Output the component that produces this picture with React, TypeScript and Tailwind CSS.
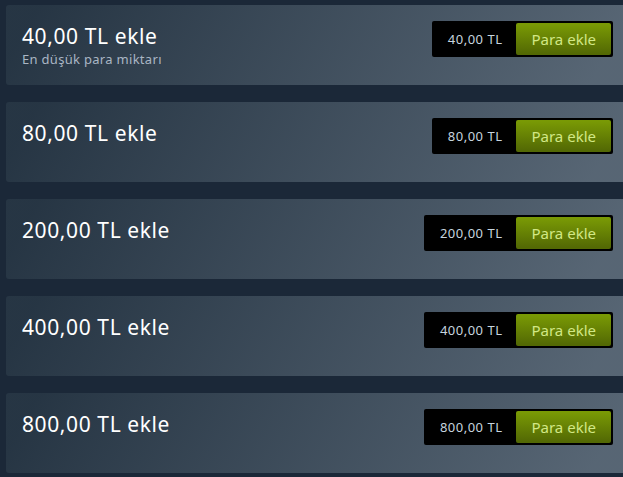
import React from "react";

const items = [
  { amount: "40,00", sub: "En düşük para miktarı" },
  { amount: "80,00" },
  { amount: "200,00" },
  { amount: "400,00" },
  { amount: "800,00" },
];

export default function App() {
  return (
    <div
      className="w-[623px] h-[477px] overflow-hidden bg-[#1b2838] pl-[6px] pt-[5px] flex flex-col gap-[17px]"
      style={{ fontFamily: '"Noto Sans", Arial, sans-serif' }}
    >
      {items.map((it) => (
        <div
          key={it.amount}
          className="h-[80px] shrink-0 rounded-l-[3px] bg-[linear-gradient(-60deg,rgba(226,244,255,0.3)_5%,rgba(84,107,115,0.2)_95%)] pl-[16px] pr-[10px] pt-[16px] flex justify-between items-start"
        >
          <div className="flex flex-col">
            <div className="text-[21px] leading-[30px] tracking-[0.6px] text-white">{it.amount} TL ekle</div>
            {it.sub && (
              <div className="text-[13px] leading-[14px] tracking-[0.3px] text-[#aab6c4] mt-[1px]">{it.sub}</div>
            )}
          </div>
          <div className="h-[36px] bg-black rounded-[2px] p-[2px] flex items-center">
            <div className="px-[14px] text-[13px] tracking-[0.5px] text-[#c6d4df] leading-[32px]">{it.amount} TL</div>
            <div className="h-[32px] px-[15px] rounded-[2px] bg-[linear-gradient(to_bottom,#799905_5%,#536904_95%)] text-[#d2e885] text-[15px] leading-[32px]">
              Para ekle
            </div>
          </div>
        </div>
      ))}
    </div>
  );
}
